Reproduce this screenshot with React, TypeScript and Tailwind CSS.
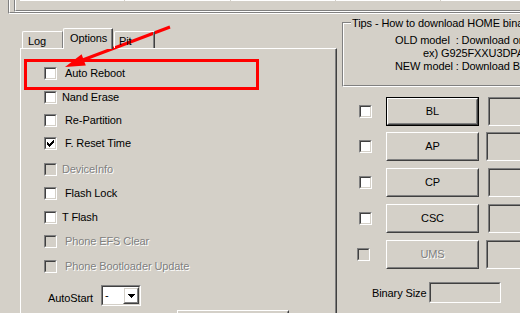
import React from "react";

function Check({ checked = false, disabled = false, className = "" }: { checked?: boolean; disabled?: boolean; className?: string }) {
  return (
    <div className={`w-[13px] h-[13px] shrink-0 border border-t-[#808080] border-l-[#808080] border-b-white border-r-white ${className}`}>
      <div className={`relative w-full h-full border border-t-[#404040] border-l-[#404040] border-b-[#d4d0c8] border-r-[#d4d0c8] ${disabled ? "bg-[#d4d0c8]" : "bg-white"}`}>
        {checked && (
          <svg width="9" height="9" viewBox="0 0 9 9" className="absolute left-0 top-0" shapeRendering="crispEdges">
            <rect x="1" y="3" width="1" height="3" fill="#000" />
            <rect x="2" y="4" width="1" height="3" fill="#000" />
            <rect x="3" y="5" width="1" height="3" fill="#000" />
            <rect x="4" y="4" width="1" height="3" fill="#000" />
            <rect x="5" y="3" width="1" height="3" fill="#000" />
            <rect x="6" y="2" width="1" height="3" fill="#000" />
            <rect x="7" y="1" width="1" height="3" fill="#000" />
          </svg>
        )}
      </div>
    </div>
  );
}

function Btn({ children, def = false, className = "" }: { children?: React.ReactNode; def?: boolean; className?: string }) {
  const inner = (
    <div className="w-full h-full border border-t-white border-l-white border-b-[#404040] border-r-[#404040]">
      <div className="w-full h-full border border-t-[#d4d0c8] border-l-[#d4d0c8] border-b-[#808080] border-r-[#808080] flex items-center justify-center">
        {children}
      </div>
    </div>
  );
  return def ? <div className={`shrink-0 border border-black ${className}`}>{inner}</div> : <div className={`shrink-0 ${className}`}>{inner}</div>;
}

function Field({ className = "" }: { className?: string }) {
  return (
    <div className={`shrink-0 border border-t-[#808080] border-l-[#808080] border-b-white border-r-white ${className}`}>
      <div className="w-full h-full border border-t-[#404040] border-l-[#404040] border-b-[#d4d0c8] border-r-[#d4d0c8] bg-[#d4d0c8]" />
    </div>
  );
}

const DIS = "text-[#808080] [text-shadow:1px_1px_0_#ffffff]";

const rows = [
  { label: "Auto Reboot", mt: "mt-0", gap: "ml-[8px]" },
  { label: "Nand Erase", mt: "mt-[11px]", gap: "ml-[5px]" },
  { label: "Re-Partition", mt: "mt-[10px]", gap: "ml-[8px]" },
  { label: "F. Reset Time", mt: "mt-[10px]", gap: "ml-[8px]", checked: true },
  { label: "DeviceInfo", mt: "mt-[13px]", gap: "ml-[5px]", disabled: true },
  { label: "Flash Lock", mt: "mt-[11px]", gap: "ml-[8px]" },
  { label: "T Flash", mt: "mt-[11px]", gap: "ml-[5px]" },
  { label: "Phone EFS Clear", mt: "mt-[11px]", gap: "ml-[8px]", disabled: true },
  { label: "Phone Bootloader Update", mt: "mt-[12px]", gap: "ml-[8px]", disabled: true },
];

const btnRows = [
  { label: "BL", def: true, mt: "mt-[10px]", chk: "ml-[17px]", btn: "ml-[14px]", fld: "ml-[9px]" },
  { label: "AP", mt: "mt-[6px]", chk: "ml-[17px]", btn: "ml-[14px]", fld: "ml-[7px]" },
  { label: "CP", mt: "mt-[7px]", chk: "ml-[17px]", btn: "ml-[14px]", fld: "ml-[9px]" },
  { label: "CSC", mt: "mt-[7px]", chk: "ml-[17px]", btn: "ml-[14px]", fld: "ml-[9px]" },
  { label: "UMS", mt: "mt-[7px]", chk: "ml-[15px]", btn: "ml-[16px]", fld: "ml-[7px]", disabled: true },
];

export default function App() {
  return (
    <div className="relative w-[520px] h-[313px] overflow-hidden bg-[#d4d0c8] font-['Liberation_Sans',Arial,sans-serif] text-[11px] leading-[13px] tracking-[-0.1px] text-black flex flex-col">
      {/* top strip */}
      <div className="h-[14px] shrink-0 pl-[8px] flex">
        <div className="flex-1 border-l border-b border-l-[#808080] border-b-white flex">
          <div className="flex-1 border-l border-b border-l-white border-b-[#808080] pl-[4px] flex items-start">
            <div className="flex-1 h-[12px] border-l border-b border-l-[#808080] border-b-white flex">
              <div className="flex-1 border-l border-b border-l-white border-b-[#808080] pl-[4px] flex gap-[1px] items-start">
                <div className="w-[104px] h-[1px] bg-white" />
                <div className="w-[105px] h-[1px] bg-white" />
                <div className="w-[104px] h-[1px] bg-white" />
                <div className="w-[104px] h-[1px] bg-white" />
                <div className="flex-1 h-[1px] bg-white" />
              </div>
            </div>
          </div>
        </div>
      </div>

      <div className="flex-1 flex min-h-0">
        {/* left: tab control */}
        <div className="w-[337px] shrink-0 pl-[20px] pt-[14px] flex flex-col">
          <div className="h-[20px] shrink-0 flex items-end relative z-10">
            <div className="ml-[2px] w-[41px] h-[17px] border-t border-l border-r border-t-white border-l-white border-r-[#808080] rounded-tl-[2px] pl-[5px] pt-[3px]">Log</div>
            <div className="w-[50px] h-[21px] -mb-[1px] bg-[#d4d0c8] border-t border-l border-r border-t-white border-l-white border-r-[#404040] rounded-tl-[2px] rounded-tr-[1px]">
              <div className="h-full border-r border-r-[#808080] pl-[6px] pt-[3px]">Options</div>
            </div>
            <div className="ml-[1px] w-[41px] h-[17px] border-t border-l border-r border-t-white border-l-white border-r-[#404040] rounded-tl-[2px] rounded-tr-[1px]">
              <div className="h-full border-r border-r-[#808080] pl-[4px] pt-[3px]">Pit</div>
            </div>
          </div>
          <div className="w-[317px] flex-1 border-t border-l border-r border-t-white border-l-white border-r-[#404040]">
            <div className="h-full border-r border-r-[#808080] flex flex-col pl-[23px] pt-[18px]">
              {rows.map((r) => (
                <div key={r.label} className={`h-[13px] flex items-center ${r.mt}`}>
                  <Check checked={r.checked} disabled={r.disabled} />
                  <span className={`${r.gap} whitespace-nowrap ${r.disabled ? DIS : ""}`}>{r.label}</span>
                </div>
              ))}
              <div className="mt-[12px] h-[21px] flex items-center">
                <span className="ml-[4px] w-[53px] shrink-0 pt-[5px]">AutoStart</span>
                <div className="w-[40px] h-[21px] shrink-0 border border-t-[#808080] border-l-[#808080] border-b-white border-r-white">
                  <div className="w-full h-full border border-t-[#404040] border-l-[#404040] border-b-[#d4d0c8] border-r-[#d4d0c8] bg-white flex items-center">
                    <span className="flex-1 pl-[2px]">-</span>
                    <Btn className="w-[16px] h-[17px]">
                      <svg width="7" height="4" viewBox="0 0 7 4" shapeRendering="crispEdges">
                        <path d="M0 0H7L3.5 4Z" fill="#000" />
                      </svg>
                    </Btn>
                  </div>
                </div>
              </div>
              <Btn className="mt-[4px] ml-[133px] w-[112px] h-[25px]" />
            </div>
          </div>
        </div>

        {/* right column */}
        <div className="ml-[5px] pt-[8px] flex flex-col">
          <div className="relative w-[300px] h-[65px] shrink-0 border-l border-t border-b border-l-[#808080] border-t-[#808080] border-b-white">
            <div className="h-full border-l border-t border-b border-l-white border-t-white border-b-[#808080] pt-[10px] flex flex-col whitespace-pre">
              <div className="pl-[51px]">OLD model  : Download on</div>
              <div className="pl-[79px]">ex) G925FXXU3DPA5</div>
              <div className="pl-[51px]">NEW model : Download BL</div>
            </div>
            <span className="absolute left-[8px] top-[-6px] bg-[#d4d0c8] px-[1px] whitespace-nowrap">Tips - How to download HOME binary</span>
          </div>

          {btnRows.map((b) => (
            <div key={b.label} className={`h-[29px] shrink-0 flex items-center ${b.mt}`}>
              <Check disabled={b.disabled} className={b.chk} />
              <Btn def={b.def} className={`${b.btn} w-[93px] h-[29px]`}>
                <span className={b.disabled ? DIS : ""}>{b.label}</span>
              </Btn>
              <Field className={`${b.fld} w-[60px] h-[29px]`} />
            </div>
          ))}

          <div className="mt-[13px] h-[21px] shrink-0 flex items-center">
            <span className="ml-[30px] w-[57px] shrink-0 pt-[2px] whitespace-nowrap">Binary Size</span>
            <Field className="w-[72px] h-[21px]" />
          </div>
        </div>
      </div>

      {/* annotation overlays */}
      <div className="absolute left-[24px] top-[59px] w-[235px] h-[31px] border-[3px] border-[#ff0000] pointer-events-none" />
      <svg className="absolute left-0 top-0 pointer-events-none" width="520" height="313" viewBox="0 0 520 313">
        <line x1="170" y1="27" x2="80" y2="61" stroke="#ff0000" strokeWidth="3" />
        <polygon points="65,67 85.8,65.5 81.6,54.3" fill="#ff0000" />
      </svg>
    </div>
  );
}
